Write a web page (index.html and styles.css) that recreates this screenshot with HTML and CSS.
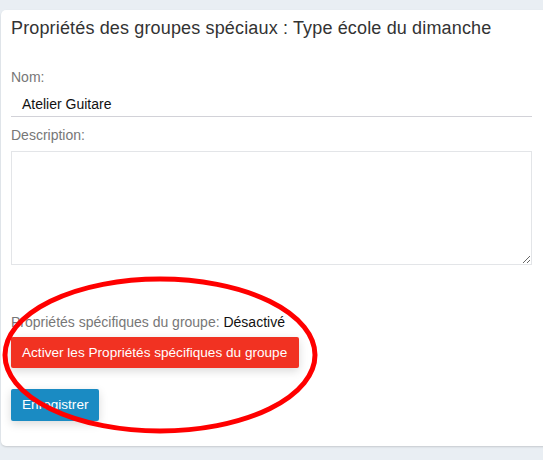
FILE: index.html
```html
<!DOCTYPE html>
<html lang="fr">
<head>
<meta charset="utf-8">
<link rel="stylesheet" href="styles.css">
</head>
<body>
<div class="card">
  <h3 class="title">Propriétés des groupes spéciaux : Type école du dimanche</h3>
  <div class="field">
    <label class="label">Nom:</label>
    <div class="input">Atelier Guitare</div>
  </div>
  <div class="field">
    <label class="label">Description:</label>
    <textarea class="textarea"></textarea>
  </div>
  <div class="props">
    <div class="props-line"><span class="label">Propriétés spécifiques du groupe:</span> <span class="state">Désactivé</span></div>
    <button class="btn btn-red">Activer les Propriétés spécifiques du groupe</button>
  </div>
  <button class="btn btn-blue">Enregistrer</button>
  <svg class="annot" width="330" height="170" viewBox="0 0 330 170">
    <ellipse cx="158" cy="83" rx="155" ry="76" fill="none" stroke="#ff0000" stroke-width="5"/>
  </svg>
</div>
</body>
</html>
```
FILE: styles.css
```css
html, body { margin: 0; padding: 0; }
body {
  background: #e9eef3;
  font-family: "Liberation Sans", Arial, sans-serif;
  width: 543px;
  height: 460px;
  overflow: hidden;
}
.card {
  position: relative;
  box-sizing: border-box;
  margin: 10px -20px 0 1px;
  background: #fff;
  border-radius: 5px;
  box-shadow: 0 1px 2px rgba(0,0,0,0.15);
  padding: 8px 31px 0 10px;
  height: 436px;
}
.title {
  margin: 0 0 31px 0;
  font-size: 18px;
  letter-spacing: 0.15px;
  font-weight: normal;
  color: #333;
  line-height: 20px;
}
.field { display: flex; flex-direction: column; }
.label {
  font-size: 14px;
  color: #777;
  line-height: 16px;
}
.input {
  margin: 11px 0 10px;
  padding: 0 0 4px 11px;
  font-size: 14px;
  line-height: 16px;
  color: #111;
  border-bottom: 1px solid #d2d2d8;
}
.textarea {
  box-sizing: border-box;
  margin: 8px 0 0;
  height: 114px;
  border: 1px solid #e3e5e8;
  border-radius: 0;
  resize: vertical;
  padding: 0;
  outline: none;
}
.props { margin-top: 49px; display: flex; flex-direction: column; align-items: flex-start; }
.props-line { font-size: 14px; line-height: 16px; }
.state { color: #111; }
.btn {
  box-sizing: border-box;
  display: block;
  border: none;
  border-radius: 2px;
  color: #fff;
  font-family: "Liberation Sans", Arial, sans-serif;
  font-size: 13.6px;
  line-height: 16px;
  padding: 0 11px;
  text-align: left;
  white-space: nowrap;
  box-shadow: 0 3px 10px rgba(0,0,0,0.15);
}
.btn-red {
  margin-top: 7px;
  background: #f13222;
  width: 288px;
  height: 31px;
}
.btn-blue {
  margin-top: 21px;
  background: #1a8bc3;
  width: 88px;
  height: 32px;
}
.annot {
  position: absolute;
  left: 1px;
  top: 262px;
  overflow: visible;
}
```
